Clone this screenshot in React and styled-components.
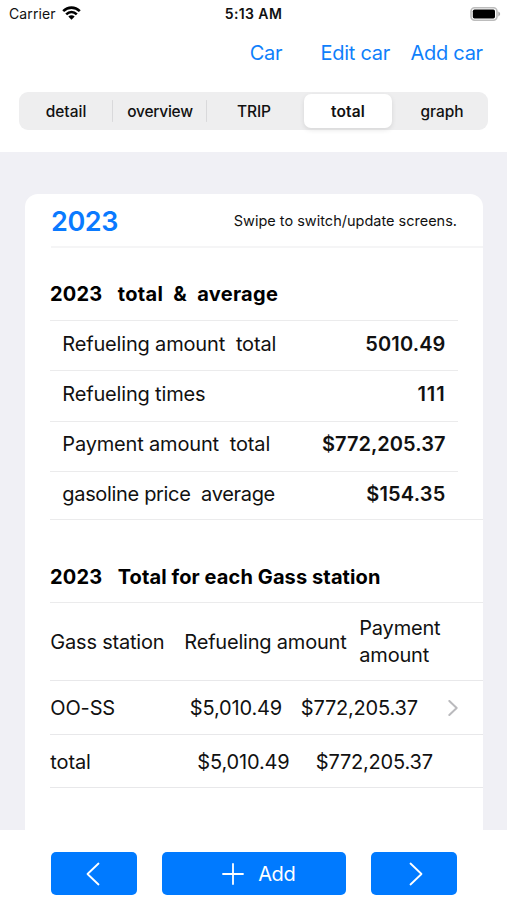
import React from "react";
import styled, { createGlobalStyle } from "styled-components";

const GlobalStyle = createGlobalStyle`
  * { box-sizing: border-box; }
  body { margin: 0; background: #fff; color: #111; font-family: Inter, "Liberation Sans", sans-serif; }
  button { font: inherit; color: inherit; border: 0; padding: 0; background: none; cursor: pointer; }
`;

const Screen = styled.div`
  width: 507px;
  height: 900px;
  overflow: hidden;
  display: flex;
  flex-direction: column;
  background: #fff;
`;

const Text = styled.span`
  display: block;
  white-space: pre;
  font-size: ${(p) => p.$size || 20}px;
  font-weight: ${(p) => p.$weight || 400};
  letter-spacing: ${(p) => p.$track || 0}px;
  line-height: ${(p) => p.$line || 27}px;
`;

const StatusBar = styled.header`
  height: 28px;
  display: grid;
  grid-template-columns: 1fr auto 1fr;
  align-items: center;
  padding: 0 9px 2px;
`;

const Carrier = styled.div`
  display: flex;
  align-items: center;
  gap: 6px;
`;

const BatteryIcon = styled.svg`
  justify-self: end;
  margin-right: -3px;
`;

const NavBar = styled.nav`
  height: 64px;
  display: flex;
  justify-content: flex-end;
  padding: 11px 24.2px 0 0;
  color: #0f7ffb;
`;

const NavButton = styled.button`
  height: 28px;
  margin-left: ${(p) => p.$gap}px;
`;

const Segments = styled.div`
  display: grid;
  grid-template-columns: repeat(5, 94px);
  width: 469.4px;
  height: 38px;
  margin: 0 0 22px 19px;
  border-radius: 9px;
  background: #eeeeef;
`;

const Segment = styled.button`
  display: flex;
  align-items: center;
  justify-content: center;
  margin: 2px ${(p) => (p.$active ? 3 : 0)}px;
  border-radius: 7px;
  background-color: ${(p) => (p.$active ? "#fff" : "transparent")};
  box-shadow: ${(p) => (p.$active ? "0 2px 5px rgba(0,0,0,.1)" : "none")};
  background-image: ${(p) => (p.$divider ? "linear-gradient(#d9d9db, #d9d9db)" : "none")};
  background-size: 1px 22px;
  background-position: right center;
  background-repeat: no-repeat;
`;

const Body = styled.main`
  height: 678px;
  padding: 42px 24.5px 0 25px;
  background: #f0f0f5;
`;

const Card = styled.section`
  height: 636px;
  padding-left: 25px;
  border-radius: 13px 13px 0 0;
  background: #fff;
`;

const CardHeader = styled.div`
  display: flex;
  align-items: center;
  justify-content: space-between;
  height: 54px;
  margin-left: 1px;
  padding: 3px 25.5px 0 0;
  border-bottom: 2px solid #f5f5f6;
`;

const Year = styled(Text)`
  color: #0a7aff;
`;

const Hint = styled(Text)`
  padding-bottom: 2px;
`;

const SectionTitle = styled.div`
  display: flex;
  gap: ${(p) => p.$gap}px;
  height: ${(p) => p.$height}px;
  padding-top: ${(p) => p.$top}px;
  margin-right: ${(p) => p.$inset || 0}px;
  border-bottom: 1px solid #ebebec;
  color: #000;
`;

const StatRow = styled.div`
  display: flex;
  justify-content: space-between;
  height: ${(p) => (p.$last ? 48.5 : 50.3)}px;
  margin-right: ${(p) => (p.$last ? 0 : 24.5)}px;
  padding: 9.5px ${(p) => (p.$last ? 37 : 12.5)}px 0 12.3px;
  border-bottom: 1px solid #ebebec;
`;

const TableRow = styled.div`
  display: grid;
  grid-template-columns: ${(p) => p.$columns};
  align-items: center;
  height: ${(p) => p.$height}px;
  padding: 2px 0 0 0.3px;
  border-bottom: 1px solid #e8e8ea;
`;

const ActionBar = styled.footer`
  display: flex;
  gap: 25.5px;
  padding: 22px 0 0 51px;
`;

const ActionButton = styled.button`
  display: flex;
  align-items: center;
  justify-content: center;
  gap: 14px;
  width: ${(p) => p.$width}px;
  height: 43px;
  padding-left: ${(p) => Math.max(p.$shift || 0, 0)}px;
  padding-right: ${(p) => Math.max(-(p.$shift || 0), 0)}px;
  border-radius: 5px;
  background: #007aff;
  color: #fff;
`;

const AddLabel = styled(Text)`
  padding-top: 1px;
`;

const navItems = [
  { label: "Car", gap: 0, track: -0.2 },
  { label: "Edit car", gap: 38, track: -0.25 },
  { label: "Add car", gap: 20.5, track: -0.3 },
];

const tabs = [
  { label: "detail", divider: true, track: 0 },
  { label: "overview", divider: true, track: -0.25 },
  { label: "TRIP", track: -0.1 },
  { label: "total", active: true, track: 0.1 },
  { label: "graph", track: 0 },
];

const stats = [
  { label: "Refueling amount  total", value: "5010.49", track: -0.17, valueTrack: 0.12 },
  { label: "Refueling times", value: "111", track: -0.17, valueTrack: 0.9 },
  { label: "Payment amount  total", value: "$772,205.37", track: -0.17, valueTrack: 0.04 },
  { label: "gasoline price  average", value: "$154.35", track: -0.33, valueTrack: 0.2 },
];

function Wifi() {
  return (
    <svg width="19" height="16" viewBox="0 0 19 16" fill="none" stroke="#000" strokeWidth="2.6">
      <path d="M1.2 5.1C6 .4 13 .4 17.8 5.1M4.2 8.4c3.1-3 7.5-3 10.6 0" />
      <path d="M6.3 10.6c1.8-1.7 4.6-1.7 6.4 0l-3.2 3.2z" fill="#000" stroke="none" />
    </svg>
  );
}

function Battery() {
  return (
    <BatteryIcon width="31" height="14" viewBox="0 0 31 14">
      <rect x="1" y=".8" width="26" height="12.4" rx="3.6" fill="#fff" stroke="#bcbcbc" strokeWidth="1.6" />
      <rect x="2.8" y="2.5" width="22.2" height="9" rx="1.7" />
      <path d="M28.3 4.6c2.4.8 2.4 4 0 4.8z" fill="#aaa" />
    </BatteryIcon>
  );
}

function Arrow({ right, small }) {
  return (
    <svg
      width={small ? 10 : 14}
      height={small ? 16 : 24}
      viewBox="0 0 14 24"
      fill="none"
      stroke={small ? "#bababd" : "#fff"}
      strokeWidth={small ? 3 : 1.8}
      strokeLinecap="round"
      strokeLinejoin="round"
    >
      <path d={right ? "M1.5 1.5 12.5 12 1.5 22.5" : "M12.5 1.5 1.5 12l11 10.5"} />
    </svg>
  );
}

export default function App() {
  return (
    <Screen>
      <GlobalStyle />
      <StatusBar>
        <Carrier>
          <Text $size={14} $track={0.1}>Carrier</Text>
          <Wifi />
        </Carrier>
        <Text $size={14} $weight={600} $track={0.4}>5:13 AM</Text>
        <Battery />
      </StatusBar>
      <NavBar>
        {navItems.map((n) => (
          <NavButton key={n.label} $gap={n.gap}>
            <Text $track={n.track}>{n.label}</Text>
          </NavButton>
        ))}
      </NavBar>
      <Segments>
        {tabs.map((t) => (
          <Segment key={t.label} $active={t.active} $divider={t.divider}>
            <Text $size={15.5} $weight={t.active ? 600 : 500} $track={t.track}>{t.label}</Text>
          </Segment>
        ))}
      </Segments>
      <Body>
        <Card>
          <CardHeader>
            <Year $size={27} $weight={600} $track={-0.4}>2023</Year>
            <Hint $size={14.5}>Swipe to switch/update screens.</Hint>
          </CardHeader>
          <SectionTitle $gap={15.5} $height={73} $top={33} $inset={24.5}>
            <Text $weight={700} $track={0.15}>2023</Text>
            <Text $weight={700} $track={0.32}>{"total  &  average"}</Text>
          </SectionTitle>
          {stats.map((s, i) => (
            <StatRow key={s.label} $last={i === stats.length - 1}>
              <Text $track={s.track}>{s.label}</Text>
              <Text $weight={600} $track={s.valueTrack}>{s.value}</Text>
            </StatRow>
          ))}
          <SectionTitle $gap={15.5} $height={82.5} $top={43.7}>
            <Text $weight={700} $track={0.15}>2023</Text>
            <Text $weight={700} $track={0.1}>Total for each Gass station</Text>
          </SectionTitle>
          <TableRow $columns="134px 175px 1fr" $height={78}>
            <Text $track={-0.2}>Gass station</Text>
            <Text $track={-0.2}>Refueling amount</Text>
            <Text $track={-0.2}>{"Payment\namount"}</Text>
          </TableRow>
          <TableRow $columns="139.5px 111px 147px 1fr" $height={54}>
            <Text $track={-0.15}>OO-SS</Text>
            <Text $track={-0.15}>$5,010.49</Text>
            <Text $track={-0.2}>$772,205.37</Text>
            <Arrow right small />
          </TableRow>
          <TableRow $columns="147px 118.5px 1fr" $height={53.5}>
            <Text $track={-0.1}>total</Text>
            <Text $track={-0.15}>$5,010.49</Text>
            <Text $track={-0.2}>$772,205.37</Text>
          </TableRow>
        </Card>
      </Body>
      <ActionBar>
        <ActionButton $width={85.5} $shift={-2} aria-label="Previous"><Arrow /></ActionButton>
        <ActionButton $width={183.5} $shift={10}>
          <svg width="22" height="22" viewBox="0 0 22 22" fill="none" stroke="#fff" strokeWidth="1.8" strokeLinecap="round">
            <path d="M11 1v20M1 11h20" />
          </svg>
          <AddLabel $track={-0.4}>Add</AddLabel>
        </ActionButton>
        <ActionButton $width={85.5} $shift={4} aria-label="Next"><Arrow right /></ActionButton>
      </ActionBar>
    </Screen>
  );
}
